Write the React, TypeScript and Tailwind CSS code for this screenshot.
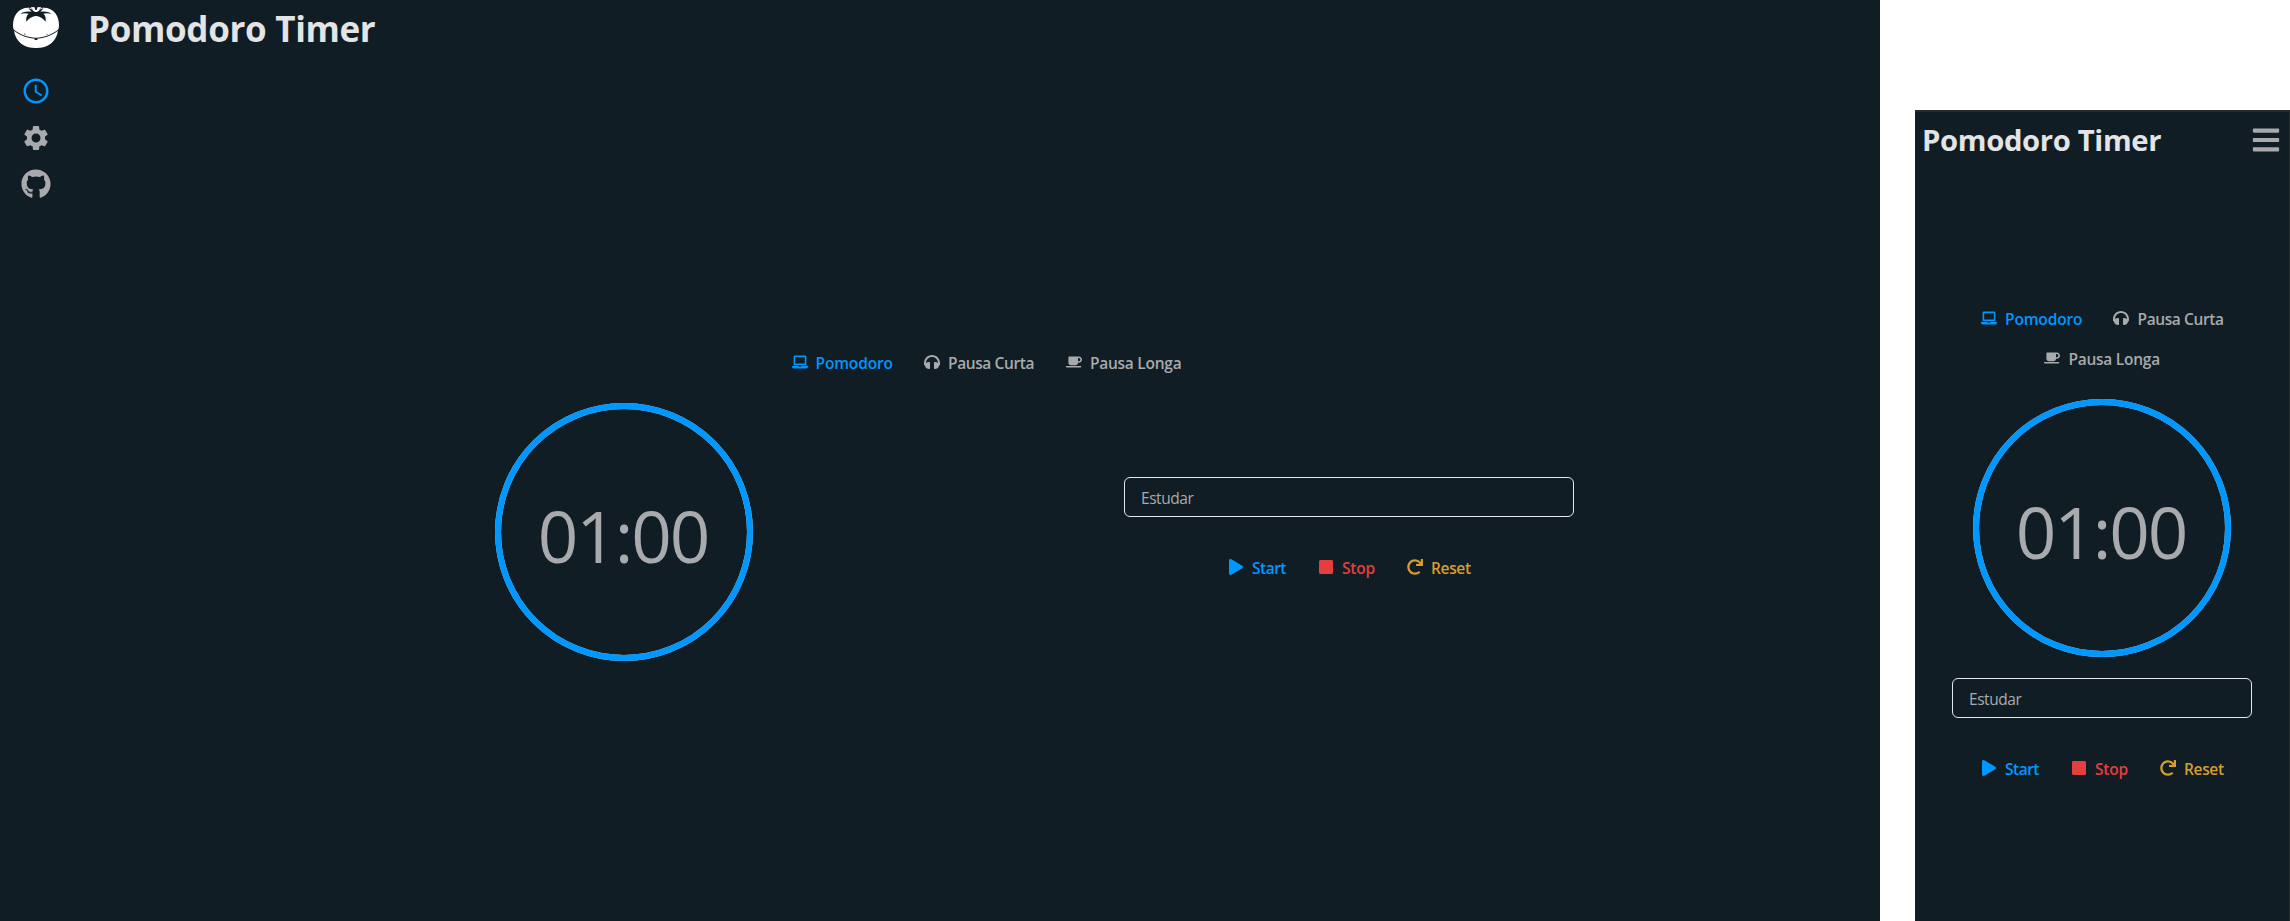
import React from "react";
import {
  FaBars,
  FaCoffee,
  FaGithub,
  FaHeadphones,
  FaLaptop,
  FaPlay,
  FaRedo,
  FaStop,
} from "react-icons/fa";
import { MdAccessTime, MdSettings } from "react-icons/md";

function TomatoLogo() {
  return (
    <svg width="46" height="41" viewBox="0 0 138 123" aria-hidden="true">
      <path
        fill="#fff"
        d="M54 3C37 0 20 6 11 19C3 30 0 42 0 55C0 63 1 66 3 68C22 82 43 91 69 92C95 91 116 82 135 68C137 66 138 63 138 55C138 42 135 30 127 19C118 6 101 0 84 3L78 8L60 8Z"
      />
      <path
        fill="#fff"
        d="M3 71C22 85 43 94 69 95C95 94 116 85 135 71C130 104 106 123 69 123C32 123 8 104 3 71Z"
      />
      <path fill="#fff" d="M53 0L65 1L67 14L61 9ZM85 0L73 1L71 14L77 9Z" />
      <path
        fill="#111d24"
        d="M46 4C51 4 57 7 62 13L67 15L71 15L76 13C81 7 87 4 92 4L82 14C94 12 107 14 116 20C106 18 98 18 91 20C98 25 99 34 98 44C91 36 84 29 69 27C54 29 47 36 40 44C39 34 40 25 47 20C40 18 32 18 22 20C31 14 44 12 56 14Z"
      />
      <path fill="#111d24" d="M66 94L72 94L74 99L64 99Z" />
      <path fill="#111d24" d="M33 82L36 79L38 84ZM100 84L102 80L105 82Z" />
    </svg>
  );
}

type ItemProps = {
  icon: React.ReactNode;
  label: string;
  className: string;
  textClass: string;
};

function Item({ icon, label, className, textClass }: ItemProps) {
  return (
    <button className={`flex h-10 items-center gap-2 px-4 text-[15.5px] font-semibold ${className}`}>
      {icon}
      <span className={`mt-[2px] whitespace-nowrap text-left leading-6 ${textClass}`}>{label}</span>
    </button>
  );
}

function Modes({ className }: { className: string }) {
  return (
    <div className={className}>
      <Item
        icon={<FaLaptop size={16} />}
        label="Pomodoro"
        className="text-[#0096ff]"
        textClass="w-[76px] tracking-[-0.15px]"
      />
      <Item
        icon={<FaHeadphones size={16} />}
        label="Pausa Curta"
        className="text-[#a8aaad]"
        textClass="w-[86px] pl-[0.5px] tracking-[-0.4px]"
      />
      <Item
        icon={<FaCoffee size={16} />}
        label="Pausa Longa"
        className="text-[#a8aaad]"
        textClass="w-[92px] pl-[0.5px] tracking-[-0.26px]"
      />
    </div>
  );
}

function Clock() {
  return (
    <div className="grid size-[258px] place-items-center">
      <svg className="col-start-1 row-start-1" width="258" height="258" viewBox="0 0 258 258">
        <circle cx="129" cy="129" r="126" fill="none" stroke="#c4c9cc" strokeWidth="6" />
        <circle cx="129" cy="129" r="126" fill="none" stroke="#0098ff" strokeWidth="6" />
      </svg>
      <span className="col-start-1 row-start-1 pr-[2px] pt-[7px] text-[71px] leading-none tracking-[-2.15px] text-[#a8aaad]">
        01:00
      </span>
    </div>
  );
}

function Controls() {
  return (
    <div className="flex justify-center">
      <Item
        icon={<FaPlay size={16} />}
        label="Start"
        className="text-[#0098ff]"
        textClass="w-[34px] pl-[0.5px] tracking-[-0.5px]"
      />
      <Item
        icon={<FaStop size={16} />}
        label="Stop"
        className="text-[#e53e3e]"
        textClass="w-[33px] pl-[0.5px] tracking-[-0.2px]"
      />
      <Item
        icon={<FaRedo size={16} />}
        label="Reset"
        className="text-[#d69e2e]"
        textClass="w-[40px] pl-[0.5px] tracking-[-0.35px]"
      />
    </div>
  );
}

function TaskInput({ className }: { className: string }) {
  return (
    <input
      defaultValue="Estudar"
      className={`h-10 rounded-md border border-[#e2e8f0] bg-transparent px-4 pt-[2px] text-[15.5px] tracking-[-0.45px] text-[#a8aaad] outline-none ${className}`}
    />
  );
}

function DesktopView() {
  return (
    <div className="flex h-full w-[1880px] bg-[#111d24]">
      <nav className="flex w-[72px] flex-col items-center pt-[7px] text-[#a8aaad]">
        <TomatoLogo />
        <MdAccessTime size={30} className="mt-[28px] text-[#0098ff]" />
        <MdSettings size={30} className="mt-[17px]" />
        <FaGithub size={30} className="mt-4" />
      </nav>
      <div className="flex flex-1 flex-col">
        <h1 className="h-14 pl-4 text-[35px] font-bold leading-[58px] tracking-[-0.33px] text-[#e2e4e6]">
          Pomodoro Timer
        </h1>
        <main className="flex flex-col items-center pl-[21px] pt-[286px]">
          <Modes className="flex" />
          <div className="mt-[21px] grid w-[1450px] grid-cols-2 items-center justify-items-center">
            <Clock />
            <div className="flex flex-col items-center gap-[30px]">
              <TaskInput className="w-[450px]" />
              <Controls />
            </div>
          </div>
        </main>
      </div>
    </div>
  );
}

function MobileView() {
  return (
    <div className="mt-[110px] w-[375px] border-r border-t-2 border-[#272a2c] bg-[#111d24]">
      <header className="flex h-14 items-center justify-between pl-[7px] pr-2">
        <h1 className="text-[29.25px] font-bold leading-9 tracking-[-0.35px] text-[#e2e4e6]">
          Pomodoro Timer
        </h1>
        <FaBars size={30} className="text-[#a8aaad]" />
      </header>
      <main className="flex flex-col items-center pt-[130px]">
        <Modes className="flex w-[320px] flex-wrap justify-center" />
        <div className="mt-[21px]">
          <Clock />
        </div>
        <TaskInput className="mt-[21px] w-[300px]" />
        <div className="mt-[30px]">
          <Controls />
        </div>
      </main>
    </div>
  );
}

export default function App() {
  return (
    <div className="flex h-[921px] w-[2290px] justify-between overflow-hidden bg-white font-['Open_Sans',sans-serif]">
      <DesktopView />
      <MobileView />
    </div>
  );
}
